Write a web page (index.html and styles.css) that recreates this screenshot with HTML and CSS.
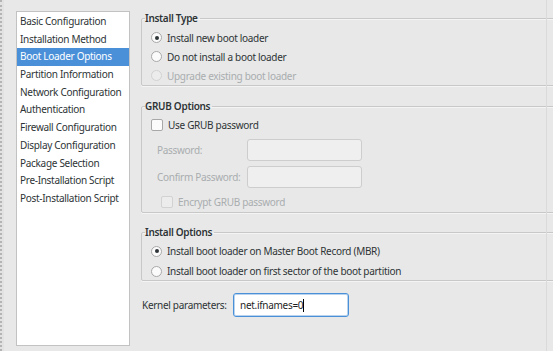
FILE: index.html
```html
<!DOCTYPE html>
<html lang="en">
<head>
    <meta charset="UTF-8">
    <title>Boot Loader Options</title>
    <link rel="stylesheet" href="styles.css">
</head>
<body>

<div class="edge"></div>

<ul class="nav">
    <li>Basic Configuration</li>
    <li>Installation Method</li>
    <li class="active">Boot Loader Options</li>
    <li>Partition Information</li>
    <li>Network Configuration</li>
    <li>Authentication</li>
    <li>Firewall Configuration</li>
    <li>Display Configuration</li>
    <li>Package Selection</li>
    <li>Pre-Installation Script</li>
    <li>Post-Installation Script</li>
</ul>

<div class="main">
    <fieldset class="group type">
        <legend>Install Type</legend>
        <div class="opt"><span class="radio on"></span>Install new boot loader</div>
        <div class="opt"><span class="radio"></span>Do not install a boot loader</div>
        <div class="opt off"><span class="radio"></span>Upgrade existing boot loader</div>
    </fieldset>

    <fieldset class="group grub">
        <legend>GRUB Options</legend>
        <div class="opt"><span class="check"></span>Use GRUB password</div>
        <div class="field off">
            <label>Password:</label>
            <span class="box"></span>
        </div>
        <div class="field off">
            <label>Confirm Password:</label>
            <span class="box"></span>
        </div>
        <div class="opt off sub"><span class="check"></span>Encrypt GRUB password</div>
    </fieldset>

    <fieldset class="group options">
        <legend>Install Options</legend>
        <div class="opt"><span class="radio on"></span>Install boot loader on Master Boot Record (MBR)</div>
        <div class="opt"><span class="radio"></span>Install boot loader on first sector of the boot partition</div>
    </fieldset>

    <div class="kernel">
        <label>Kernel parameters:</label>
        <span class="box focus">net.ifnames=0<i class="caret"></i></span>
    </div>
</div>

</body>
</html>
```

FILE: styles.css
```css
body {
    font-family: "Noto Sans", "DejaVu Sans", sans-serif;
    font-size: 10px;
    letter-spacing: -0.3px;
    background-color: #e8e8e8;
    color: #2e3436;
    margin: 0;
    height: 351px;
    overflow: hidden;
    display: flex;
    align-items: flex-start;
}
.edge {
    width: 4px;
    height: 351px;
    margin-right: 4px;
    border-left: 2px dotted #b4b4b4;
    background-color: #e2e2e2;
    box-sizing: border-box;
}
.nav {
    list-style: none;
    margin: 11px 0 0 8px;
    padding: 1px 0 0;
    width: 112px;
    height: 332px;
    background-color: #fff;
    border: 1px solid #c2c2c2;
}
.nav li {
    height: 17.7px;
    line-height: 17.7px;
    padding-left: 3px;
    white-space: nowrap;
}
.nav li.active {
    background-color: #4a90d9;
    color: #fff;
}
.main {
    position: relative;
    flex: 1;
    margin-left: 11px;
    padding-top: 11px;
    margin-right: -10px;
}
.main::after {
    content: "";
    position: absolute;
    top: 0;
    right: 16px;
    width: 1px;
    height: 351px;
    background-color: #dadada;
}
.group {
    margin: 0;
    padding: 3px 0 0 9px;
    border: 1px solid #c8c8c8;
    border-radius: 2px;
    box-shadow: inset 0 1px 0 #f4f4f4, 0 1px 0 #f4f4f4;
}
.group legend {
    font-weight: 600;
    padding: 0 2px 0 0;
    margin-left: -6px;
    line-height: 14px;
    font-size: 10px;
}
.grub {
    margin-top: 13px;
}
.options {
    margin-top: 12px;
}
.opt {
    display: flex;
    align-items: center;
    height: 19px;
    white-space: nowrap;
}
.options .opt {
    height: 18px;
    margin-bottom: 2px;
}
.options .opt:last-child {
    margin-bottom: 0;
}
.off {
    color: #a9adaf;
}
.radio, .check {
    width: 11px;
    height: 11px;
    margin-right: 5px;
    box-sizing: border-box;
    border: 1px solid #a8a8a8;
    background-color: #fbfbfb;
    flex: none;
}
.radio {
    border-radius: 50%;
    display: flex;
    align-items: center;
    justify-content: center;
}
.radio.on::after {
    content: "";
    width: 4px;
    height: 4px;
    border-radius: 50%;
    background-color: #2e3436;
}
.check {
    border-radius: 2px;
    width: 12px;
    height: 12px;
}
.off .radio, .off .check {
    border-color: #d2d2d2;
    background-color: #ececec;
}
.grub .opt {
    height: 18px;
}
.field {
    display: flex;
    align-items: center;
    margin-top: 5px;
    padding-left: 6px;
}
.field label {
    width: 90px;
}
.box {
    display: block;
    width: 115px;
    height: 22px;
    box-sizing: border-box;
    border: 1px solid #cdcdcd;
    border-radius: 3px;
    background-color: #efefef;
}
.sub {
    margin-top: 5px;
    padding-left: 10px;
    margin-bottom: 1px;
}
.kernel {
    display: flex;
    align-items: center;
    margin-top: 12px;
    padding-left: 1px;
}
.kernel label {
    width: 91px;
}
.box.focus {
    display: flex;
    align-items: center;
    width: 116px;
    height: 24px;
    padding-left: 6px;
    background-color: #fff;
    border: 1px solid #4a90d9;
    box-shadow: inset 0 0 0 1px #b9d3ef;
    color: #1f1f1f;
}
.caret {
    display: block;
    width: 1px;
    height: 13px;
    background-color: #000;
}
```
